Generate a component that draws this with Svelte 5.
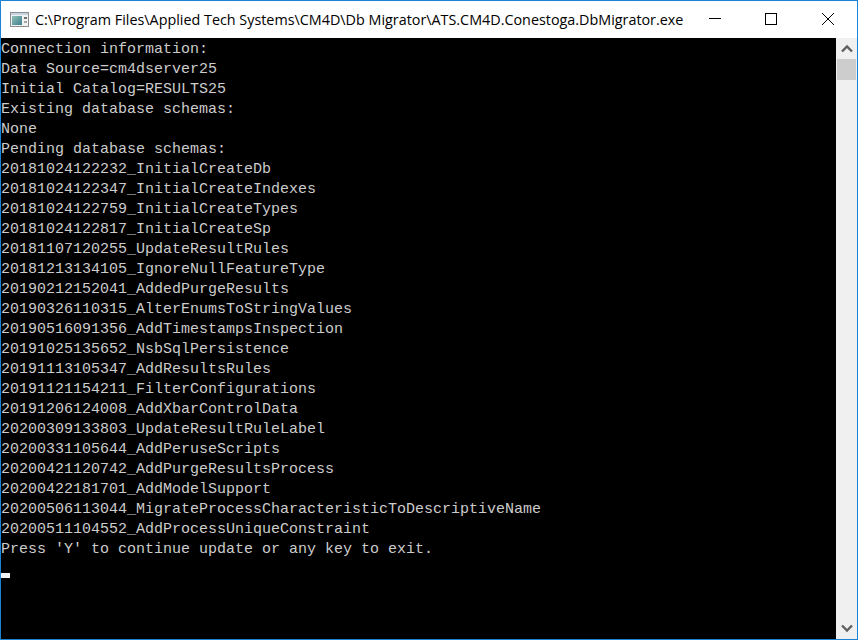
<script>
	const lines = [
		'Connection information:',
		'Data Source=cm4dserver25',
		'Initial Catalog=RESULTS25',
		'Existing database schemas:',
		'None',
		'Pending database schemas:',
		'20181024122232_InitialCreateDb',
		'20181024122347_InitialCreateIndexes',
		'20181024122759_InitialCreateTypes',
		'20181024122817_InitialCreateSp',
		'20181107120255_UpdateResultRules',
		'20181213134105_IgnoreNullFeatureType',
		'20190212152041_AddedPurgeResults',
		'20190326110315_AlterEnumsToStringValues',
		'20190516091356_AddTimestampsInspection',
		'20191025135652_NsbSqlPersistence',
		'20191113105347_AddResultsRules',
		'20191121154211_FilterConfigurations',
		'20191206124008_AddXbarControlData',
		'20200309133803_UpdateResultRuleLabel',
		'20200331105644_AddPeruseScripts',
		'20200421120742_AddPurgeResultsProcess',
		'20200422181701_AddModelSupport',
		'20200506113044_MigrateProcessCharacteristicToDescriptiveName',
		'20200511104552_AddProcessUniqueConstraint',
		"Press 'Y' to continue update or any key to exit."
	];
</script>

<div class="window">
	<header class="titlebar">
		<svg class="app-icon" width="19" height="15" viewBox="0 0 19 15">
			<defs>
				<linearGradient id="pane" x1="0" y1="0" x2="1" y2="1">
					<stop offset="0" stop-color="#8fc0b4"/>
					<stop offset="1" stop-color="#3f7f8f"/>
				</linearGradient>
			</defs>
			<rect x="0.5" y="0.5" width="18" height="14" fill="#f2f2f2" stroke="#8c8c8c"/>
			<rect x="1" y="1" width="17" height="2" fill="#c5d3e2"/>
			<rect x="2" y="4" width="10" height="9" fill="url(#pane)"/>
			<rect x="14" y="5" width="3" height="2" fill="#6f6f6f"/>
			<rect x="14" y="9" width="3" height="2" fill="#a5a5a5"/>
		</svg>
		<span class="title">C:\Program Files\Applied Tech Systems\CM4D\Db Migrator\ATS.CM4D.Conestoga.DbMigrator.exe</span>
		<div class="controls">
			<button aria-label="Minimize">
				<svg width="12" height="12" viewBox="0 0 12 12"><path d="M0 5.500h12" stroke="#000" fill="none"/></svg>
			</button>
			<button class="mid" aria-label="Maximize">
				<svg width="12" height="12" viewBox="0 0 12 12"><rect x="0.5" y="0.5" width="11" height="11" stroke="#000" fill="none"/></svg>
			</button>
			<button aria-label="Close">
				<svg width="12" height="12" viewBox="0 0 12 12"><path d="M0 0l12 12M12 0L0 12" stroke="#000" fill="none"/></svg>
			</button>
		</div>
	</header>
	<div class="body">
		<div class="console">
			{#each lines as line}
				<div class="line">{line}</div>
			{/each}
			<div class="cursor"></div>
		</div>
		<div class="scrollbar">
			<div class="arrow">
				<svg width="12" height="9" viewBox="0 0 12 9"><path d="M1 7.500l5-5 5 5" stroke="#606060" stroke-width="2.400" fill="none"/></svg>
			</div>
			<div class="thumb"></div>
			<div class="track"></div>
			<div class="arrow">
				<svg width="12" height="9" viewBox="0 0 12 9"><path d="M1 1.500l5 5 5-5" stroke="#606060" stroke-width="2.400" fill="none"/></svg>
			</div>
		</div>
	</div>
</div>

<style>
	:global(body) {
		margin: 0;
		background: #fff;
	}

	.window {
		box-sizing: border-box;
		width: 858px;
		height: 640px;
		border: 1px solid #1883d7;
		display: flex;
		flex-direction: column;
		overflow: hidden;
	}

	.titlebar {
		height: 37px;
		flex-shrink: 0;
		display: flex;
		align-items: center;
		background: #fff;
		padding-left: 9px;
	}

	.app-icon {
		flex-shrink: 0;
		margin-right: 6px;
		margin-top: -1px;
	}

	.title {
		flex: 1;
		font-family: "Open Sans", "Liberation Sans", sans-serif;
		font-size: 14.35px;
		color: #000;
		white-space: nowrap;
		overflow: hidden;
	}

	.controls {
		display: flex;
		height: 100%;
		padding-right: 1px;
	}

	.controls button {
		width: 57px;
		height: 36px;
		padding: 0;
		border: none;
		background: none;
		display: flex;
		align-items: center;
		justify-content: center;
	}

	.controls button.mid {
		width: 56px;
	}

	.body {
		flex: 1;
		display: flex;
		min-height: 0;
	}

	.console {
		flex: 1;
		background: #000;
		color: #ccc;
		font-family: "Liberation Mono", monospace;
		font-size: 15px;
		line-height: 20px;
		padding-top: 2px;
	}

	.line {
		height: 20px;
		white-space: pre;
	}

	.cursor {
		width: 9px;
		height: 5px;
		background: #f2f2f2;
		margin-top: 13px;
	}

	.scrollbar {
		width: 21px;
		flex-shrink: 0;
		background: #f0f0f0;
		display: flex;
		flex-direction: column;
		align-items: center;
	}

	.arrow {
		height: 21px;
		width: 100%;
		flex-shrink: 0;
		display: flex;
		align-items: center;
		justify-content: center;
	}

	.thumb {
		width: 19px;
		height: 21px;
		background: #cdcdcd;
		flex-shrink: 0;
	}

	.track {
		flex: 1;
	}
</style>
